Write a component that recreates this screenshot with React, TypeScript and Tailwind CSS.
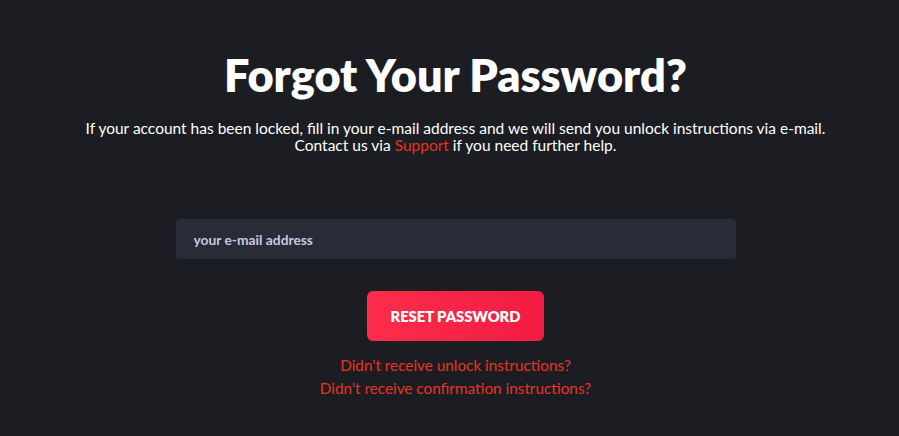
export default function App() {
  return (
    <div className="min-h-[436px] w-full bg-[#1c1d22] font-['Lato',sans-serif] text-white">
      <div className="flex flex-col items-center pl-3 pt-[49px]">
        <h1 className="text-[45px] font-extrabold leading-[52px]">Forgot Your Password?</h1>
        <div className="mt-[19px] text-center text-[15.5px] leading-[17px]">
          <p>If your account has been locked, fill in your e-mail address and we will send you unlock instructions via e-mail.</p>
          <p>
            Contact us via <a className="text-[#e8331f]">Support</a> if you need further help.
          </p>
        </div>
        <input
          type="email"
          placeholder="your e-mail address"
          className="mt-[65px] h-10 w-[560px] rounded bg-[#292b37] px-[18px] text-[13.8px] font-bold text-white outline-none placeholder:text-[#c5c9e3]"
        />
        <button className="mt-8 h-[50px] w-[177px] rounded-md bg-gradient-to-r from-[#ff2c4a] to-[#f21b44] text-[14.7px] font-extrabold text-white">
          RESET PASSWORD
        </button>
        <div className="mt-[15px] flex flex-col items-center gap-[5px] text-[15.3px] leading-[18px] text-[#e8331f]">
          <a>Didn't receive unlock instructions?</a>
          <a>Didn't receive confirmation instructions?</a>
        </div>
      </div>
    </div>
  );
}
